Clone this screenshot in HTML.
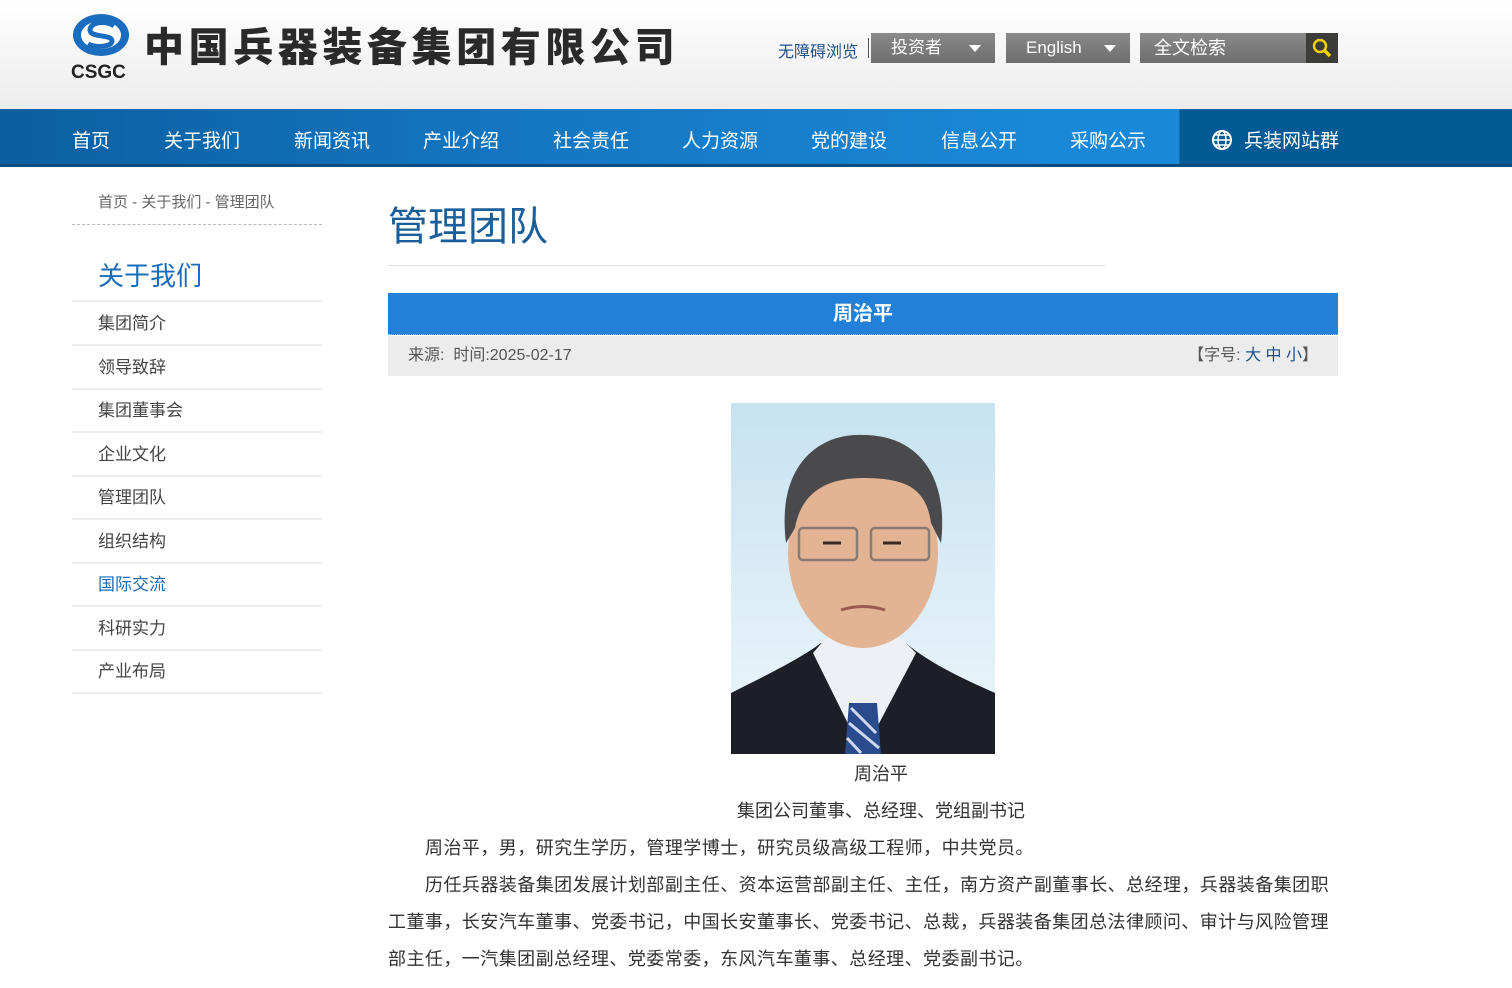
<!DOCTYPE html>
<html><head><meta charset="utf-8">
<style>
*{margin:0;padding:0;box-sizing:border-box}
body{width:1512px;height:988px;overflow:hidden;background:#fff;font-family:"Liberation Sans","Noto Sans CJK SC",sans-serif;color:#333;position:relative}
.hdr{position:absolute;left:0;top:0;width:1512px;height:109px;background:linear-gradient(#fff,#ececec)}
.abs{position:absolute}
.nav{position:absolute;left:0;top:109px;width:1512px;height:58px;background:linear-gradient(90deg,#0c5f9f 0%,#1477c2 35%,#1a88d8 70%,#1a88d8 78%,#035a94 78%,#035a94 100%);border-bottom:3px solid #0b4c7e}
.nav span{position:absolute;top:17px;color:#fff;font-size:19px}
.sel{position:absolute;top:33px;height:30px;background:linear-gradient(#8a8a8a,#6e6e6e);color:#fff;font-size:17px;line-height:30px;padding-left:20px}
.tri{position:absolute;top:12px;width:0;height:0;border-left:6px solid transparent;border-right:6px solid transparent;border-top:7px solid #fff}
.side a{display:block;position:absolute;left:72px;width:250px;height:44px;border-bottom:2px solid #ececec;font-size:17px;color:#444;padding-left:26px;line-height:44px;text-decoration:none}
.p{position:absolute;left:388px;width:950px;font-size:18px;color:#333;line-height:37px;letter-spacing:0.45px}
</style></head><body>
<div class="hdr"></div>
<svg class="abs" style="left:70px;top:12px" width="62" height="70" viewBox="0 0 62 70">
<ellipse cx="31" cy="23" rx="28" ry="21" fill="#1a6cbf"/>
<ellipse cx="31" cy="23" rx="20" ry="14" fill="#fff"/>
<path d="M44 14 C36 8 20 10 20 18 C20 26 42 22 42 29 C42 35 26 36 18 32" stroke="#1a6cbf" stroke-width="5" fill="none"/>
<text x="1" y="66" font-family="Liberation Sans" font-weight="bold" font-size="19" fill="#222">CSGC</text>
</svg>
<div class="abs" style="left:144px;top:15px;font-size:40px;font-weight:900;color:#2a2a2a;letter-spacing:4.6px;font-family:'Noto Sans CJK SC',sans-serif">中国兵器装备集团有限公司</div>
<div class="abs" style="left:778px;top:38px;font-size:16px;color:#1d4f8a">无障碍浏览</div>
<div class="abs" style="left:868px;top:38px;width:1px;height:20px;background:#555"></div>
<div class="sel" style="left:871px;width:124px">投资者<i class="tri" style="left:98px"></i></div>
<div class="sel" style="left:1006px;width:124px;font-family:'Liberation Sans',sans-serif">English<i class="tri" style="left:98px"></i></div>
<div class="sel" style="left:1140px;width:198px;padding-left:14px;font-size:18px">全文检索
<div style="position:absolute;right:0;top:0;width:32px;height:30px;background:#3c3c3a"><svg width="32" height="30"><circle cx="14" cy="13" r="6" stroke="#f2d200" stroke-width="2.5" fill="none"/><path d="M18 17 L24 23" stroke="#f2d200" stroke-width="3.5"/></svg></div></div>
<div class="nav">
<span style="left:72px">首页</span><span style="left:164px">关于我们</span><span style="left:294px">新闻资讯</span><span style="left:423px">产业介绍</span><span style="left:553px">社会责任</span><span style="left:682px">人力资源</span><span style="left:811px">党的建设</span><span style="left:941px">信息公开</span><span style="left:1070px">采购公示</span>
<svg class="abs" style="left:1210px;top:19px" width="24" height="24"><circle cx="12" cy="12" r="9" fill="none" stroke="#fff" stroke-width="2"/><ellipse cx="12" cy="12" rx="4" ry="9" fill="none" stroke="#fff" stroke-width="1.5"/><path d="M3 12H21M5 7H19M5 17H19" stroke="#fff" stroke-width="1.5"/></svg>
<span style="left:1244px">兵装网站群</span>
</div>
<div class="abs" style="left:98px;top:191px;font-size:15px;color:#666">首页 - 关于我们 - 管理团队</div>
<div class="abs" style="left:72px;top:224px;width:250px;border-top:1px dashed #bbb"></div>
<div class="abs" style="left:98px;top:256px;font-size:26px;color:#1a6cb8">关于我们</div>
<div class="abs" style="left:72px;top:300px;width:250px;height:2px;background:#ececec"></div>
<div class="side">
<a style="top:302px">集团简介</a><a style="top:346px">领导致辞</a><a style="top:389px">集团董事会</a><a style="top:433px">企业文化</a><a style="top:476px">管理团队</a><a style="top:520px">组织结构</a><a style="top:563px;color:#1a6cb8">国际交流</a><a style="top:607px">科研实力</a><a style="top:650px">产业布局</a>
</div>
<div class="abs" style="left:388px;top:194px;font-size:40px;color:#1a5e9a">管理团队</div>
<div class="abs" style="left:388px;top:265px;width:718px;height:1px;background:#ddd"></div>
<div class="abs" style="left:388px;top:293px;width:950px;height:42px;background:#2380d8;color:#fff;font-size:20px;font-weight:bold;text-align:center;line-height:42px;border-bottom:1px dotted #9cc6ef">周治平</div>
<div class="abs" style="left:388px;top:336px;width:950px;height:40px;background:#ececec;font-size:16px;color:#555;line-height:40px;padding-left:20px">来源:&nbsp; 时间:2025-02-17<span style="position:absolute;right:20px">【字号: <span style="color:#1d4f8a;position:static">大 中 小</span>】</span></div>
<svg class="abs" style="left:731px;top:403px" width="264" height="351" viewBox="0 0 264 351">
<defs><linearGradient id="bg" x1="0" y1="0" x2="0" y2="1"><stop offset="0" stop-color="#c6e2f1"/><stop offset="1" stop-color="#eef6fb"/></linearGradient></defs>
<rect width="264" height="351" fill="url(#bg)"/>
<path d="M0 290 C40 270 70 255 90 240 L175 240 C195 258 230 275 264 290 L264 351 L0 351Z" fill="#1d1f27"/>
<path d="M82 250 L132 351 L185 250 L170 235 L95 235Z" fill="#eef0f5"/>
<path d="M118 300 L146 300 L150 351 L114 351Z" fill="#2a4c8f"/>
<path d="M120 305 L145 330 M118 320 L148 345 M116 335 L130 350" stroke="#cfd9ee" stroke-width="3"/>
<ellipse cx="132" cy="150" rx="75" ry="95" fill="#e2b493"/>
<path d="M55 140 C45 60 90 30 132 32 C185 32 218 70 210 140 L200 120 C195 85 175 75 132 75 C95 75 70 90 64 125Z" fill="#4a4a4c"/>
<rect x="68" y="125" width="58" height="32" rx="4" fill="none" stroke="#8a7a74" stroke-width="2.5"/>
<rect x="140" y="125" width="58" height="32" rx="4" fill="none" stroke="#8a7a74" stroke-width="2.5"/>
<path d="M92 140h18M152 140h18" stroke="#3a2a24" stroke-width="3"/>
<path d="M110 207 Q132 200 154 207" stroke="#9a5a50" stroke-width="3" fill="none"/>
</svg>
<div class="abs" style="left:388px;top:756px;width:986px;text-align:center;font-size:18px;line-height:37px">周治平</div>
<div class="abs" style="left:388px;top:793px;width:986px;text-align:center;font-size:18px;line-height:37px">集团公司董事、总经理、党组副书记</div>
<div class="p" style="top:830px;text-indent:37px">周治平，男，研究生学历，管理学博士，研究员级高级工程师，中共党员。</div>
<div class="p" style="top:867px;text-indent:37px">历任兵器装备集团发展计划部副主任、资本运营部副主任、主任，南方资产副董事长、总经理，兵器装备集团职工董事，长安汽车董事、党委书记，中国长安董事长、党委书记、总裁，兵器装备集团总法律顾问、审计与风险管理部主任，一汽集团副总经理、党委常委，东风汽车董事、总经理、党委副书记。</div>
</body></html>
